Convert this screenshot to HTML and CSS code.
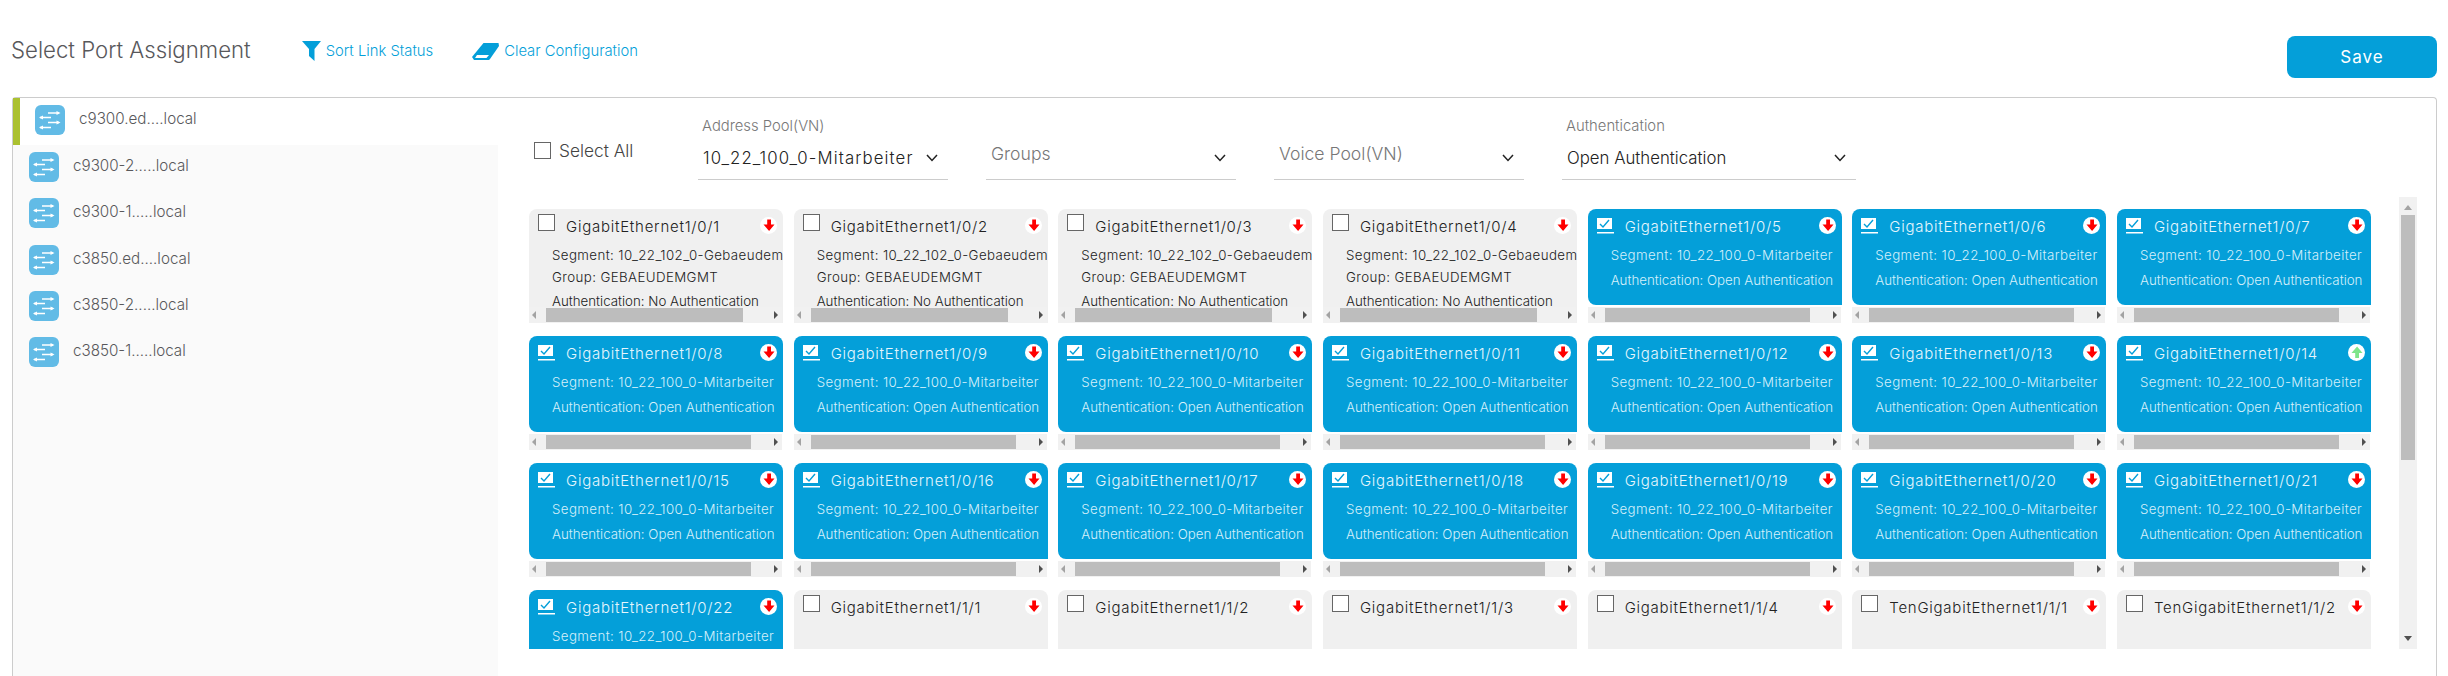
FILE: index.html
```html
<!DOCTYPE html>
<html lang="en">
<head>
  <meta charset="UTF-8" />
  <title>Select Port Assignment</title>
  <link rel="stylesheet" href="styles.css">
</head>
<body>

  <svg class="defs" width="0" height="0">
    <symbol id="switch" viewBox="0 0 30 30">
      <g fill="none" stroke="#fff" stroke-width="1.4">
        <path d="M13 8h11M5 12.5h11M13 17.5h11M5 22.500h11"/>
      </g>
      <g fill="#fff">
        <path d="M25.500 8l-4-2v4zM4 12.500l4-2v4zM25.500 17.500l-4-2v4zM4 22.500l4-2v4z"/>
      </g>
    </symbol>
    <symbol id="down" viewBox="0 0 17 17">
      <circle cx="8.500" cy="8.500" r="8.500" fill="#fff"/>
      <path d="M7.200 2.500h3.800v5h3.500l-5.400 6.500-5.600-6.500h3.700z" fill="#f00"/>
    </symbol>
    <symbol id="up" viewBox="0 0 17 17">
      <circle cx="8.500" cy="8.500" r="8.500" fill="#fff"/>
      <path d="M7.200 14h3.800v-5h3.500l-5.400-6.500-5.600 6.500h3.700z" fill="#7fe58a"/>
    </symbol>
    <symbol id="chev" viewBox="0 0 12 8">
      <path d="M1 1l5 5.500 5-5.500" fill="none" stroke="#222" stroke-width="1.500"/>
    </symbol>
    <symbol id="check" viewBox="0 0 17 16">
      <path d="M0 0h15v11H0z" fill="#fff"/>
      <path d="M3 6l3 3 6-7" fill="none" stroke="#049fd9" stroke-width="1.400"/>
      <path d="M0 14h17v1.500H0z" fill="#fff"/>
    </symbol>
  </svg>

  <!-- Title row -->
  <div class="top">
    <div class="title">Select Port Assignment</div>
    <a class="link link-sort">
      <svg width="19" height="20" viewBox="0 0 19 20"><path d="M0 0h19l-6.500 8v12L7 15V8z" fill="#049fd9"/></svg>
      Sort Link Status
    </a>
    <a class="link link-clear">
      <svg width="27" height="18" viewBox="0 0 27 18">
        <path d="M11.500 1h15l.5 3L18 17l-1 1H2l-2-3z" fill="#049fd9"/>
        <path d="M5 13h12l-2.500 3H3z" fill="#fff"/>
      </svg>
      Clear Configuration
    </a>
    <button class="save">Save</button>
  </div>

  <div class="panel">

    <!-- Devices -->
    <div class="sidebar">
      <div class="device selected"><svg class="device-icon"><use href="#switch"/></svg>c9300.ed....local</div>
      <div class="device"><svg class="device-icon"><use href="#switch"/></svg>c9300-2.....local</div>
      <div class="device"><svg class="device-icon"><use href="#switch"/></svg>c9300-1.....local</div>
      <div class="device"><svg class="device-icon"><use href="#switch"/></svg>c3850.ed....local</div>
      <div class="device"><svg class="device-icon"><use href="#switch"/></svg>c3850-2.....local</div>
      <div class="device"><svg class="device-icon"><use href="#switch"/></svg>c3850-1.....local</div>
    </div>

    <div class="main">

      <!-- Filters -->
      <div class="filters">
        <label class="select-all"><span class="box"></span>Select All</label>
        <div class="field">
          <div class="field-label">Address Pool(VN)</div>
          <div class="field-value pool">10_22_100_0-Mitarbeiter<svg class="chev"><use href="#chev"/></svg></div>
        </div>
        <div class="field">
          <div class="field-value empty">Groups<svg class="chev"><use href="#chev"/></svg></div>
        </div>
        <div class="field">
          <div class="field-value empty">Voice Pool(VN)<svg class="chev"><use href="#chev"/></svg></div>
        </div>
        <div class="field wide">
          <div class="field-label">Authentication</div>
          <div class="field-value">Open Authentication<svg class="chev"><use href="#chev"/></svg></div>
        </div>
      </div>

      <!-- Ports -->
      <div class="ports-wrap">
        <div class="ports">

          <div class="port off">
            <div class="port-body">
              <div class="port-head"><span class="box"></span><span class="port-name">GigabitEthernet1/0/1</span><svg class="status"><use href="#down"/></svg></div>
              <p class="seg">Segment: 10_22_102_0-Gebaeudem</p>
              <p class="grp">Group: GEBAEUDEMGMT</p>
              <p class="auth">Authentication: No Authentication</p>
            </div>
            <div class="hbar"><i class="arr-l"></i><b></b><i class="arr-r"></i></div>
          </div>
          <div class="port off">
            <div class="port-body">
              <div class="port-head"><span class="box"></span><span class="port-name">GigabitEthernet1/0/2</span><svg class="status"><use href="#down"/></svg></div>
              <p class="seg">Segment: 10_22_102_0-Gebaeudem</p>
              <p class="grp">Group: GEBAEUDEMGMT</p>
              <p class="auth">Authentication: No Authentication</p>
            </div>
            <div class="hbar"><i class="arr-l"></i><b></b><i class="arr-r"></i></div>
          </div>
          <div class="port off">
            <div class="port-body">
              <div class="port-head"><span class="box"></span><span class="port-name">GigabitEthernet1/0/3</span><svg class="status"><use href="#down"/></svg></div>
              <p class="seg">Segment: 10_22_102_0-Gebaeudem</p>
              <p class="grp">Group: GEBAEUDEMGMT</p>
              <p class="auth">Authentication: No Authentication</p>
            </div>
            <div class="hbar"><i class="arr-l"></i><b></b><i class="arr-r"></i></div>
          </div>
          <div class="port off">
            <div class="port-body">
              <div class="port-head"><span class="box"></span><span class="port-name">GigabitEthernet1/0/4</span><svg class="status"><use href="#down"/></svg></div>
              <p class="seg">Segment: 10_22_102_0-Gebaeudem</p>
              <p class="grp">Group: GEBAEUDEMGMT</p>
              <p class="auth">Authentication: No Authentication</p>
            </div>
            <div class="hbar"><i class="arr-l"></i><b></b><i class="arr-r"></i></div>
          </div>
          <div class="port on">
            <div class="port-body">
              <div class="port-head"><svg class="tick"><use href="#check"/></svg><span class="port-name">GigabitEthernet1/0/5</span><svg class="status"><use href="#down"/></svg></div>
              <p class="seg">Segment: 10_22_100_0-Mitarbeiter</p>
              <p class="auth">Authentication: Open Authentication</p>
            </div>
            <div class="hbar"><i class="arr-l"></i><b></b><i class="arr-r"></i></div>
          </div>
          <div class="port on">
            <div class="port-body">
              <div class="port-head"><svg class="tick"><use href="#check"/></svg><span class="port-name">GigabitEthernet1/0/6</span><svg class="status"><use href="#down"/></svg></div>
              <p class="seg">Segment: 10_22_100_0-Mitarbeiter</p>
              <p class="auth">Authentication: Open Authentication</p>
            </div>
            <div class="hbar"><i class="arr-l"></i><b></b><i class="arr-r"></i></div>
          </div>
          <div class="port on">
            <div class="port-body">
              <div class="port-head"><svg class="tick"><use href="#check"/></svg><span class="port-name">GigabitEthernet1/0/7</span><svg class="status"><use href="#down"/></svg></div>
              <p class="seg">Segment: 10_22_100_0-Mitarbeiter</p>
              <p class="auth">Authentication: Open Authentication</p>
            </div>
            <div class="hbar"><i class="arr-l"></i><b></b><i class="arr-r"></i></div>
          </div>

          <div class="port on">
            <div class="port-body">
              <div class="port-head"><svg class="tick"><use href="#check"/></svg><span class="port-name">GigabitEthernet1/0/8</span><svg class="status"><use href="#down"/></svg></div>
              <p class="seg">Segment: 10_22_100_0-Mitarbeiter</p>
              <p class="auth">Authentication: Open Authentication</p>
            </div>
            <div class="hbar"><i class="arr-l"></i><b></b><i class="arr-r"></i></div>
          </div>
          <div class="port on">
            <div class="port-body">
              <div class="port-head"><svg class="tick"><use href="#check"/></svg><span class="port-name">GigabitEthernet1/0/9</span><svg class="status"><use href="#down"/></svg></div>
              <p class="seg">Segment: 10_22_100_0-Mitarbeiter</p>
              <p class="auth">Authentication: Open Authentication</p>
            </div>
            <div class="hbar"><i class="arr-l"></i><b></b><i class="arr-r"></i></div>
          </div>
          <div class="port on">
            <div class="port-body">
              <div class="port-head"><svg class="tick"><use href="#check"/></svg><span class="port-name">GigabitEthernet1/0/10</span><svg class="status"><use href="#down"/></svg></div>
              <p class="seg">Segment: 10_22_100_0-Mitarbeiter</p>
              <p class="auth">Authentication: Open Authentication</p>
            </div>
            <div class="hbar"><i class="arr-l"></i><b></b><i class="arr-r"></i></div>
          </div>
          <div class="port on">
            <div class="port-body">
              <div class="port-head"><svg class="tick"><use href="#check"/></svg><span class="port-name">GigabitEthernet1/0/11</span><svg class="status"><use href="#down"/></svg></div>
              <p class="seg">Segment: 10_22_100_0-Mitarbeiter</p>
              <p class="auth">Authentication: Open Authentication</p>
            </div>
            <div class="hbar"><i class="arr-l"></i><b></b><i class="arr-r"></i></div>
          </div>
          <div class="port on">
            <div class="port-body">
              <div class="port-head"><svg class="tick"><use href="#check"/></svg><span class="port-name">GigabitEthernet1/0/12</span><svg class="status"><use href="#down"/></svg></div>
              <p class="seg">Segment: 10_22_100_0-Mitarbeiter</p>
              <p class="auth">Authentication: Open Authentication</p>
            </div>
            <div class="hbar"><i class="arr-l"></i><b></b><i class="arr-r"></i></div>
          </div>
          <div class="port on">
            <div class="port-body">
              <div class="port-head"><svg class="tick"><use href="#check"/></svg><span class="port-name">GigabitEthernet1/0/13</span><svg class="status"><use href="#down"/></svg></div>
              <p class="seg">Segment: 10_22_100_0-Mitarbeiter</p>
              <p class="auth">Authentication: Open Authentication</p>
            </div>
            <div class="hbar"><i class="arr-l"></i><b></b><i class="arr-r"></i></div>
          </div>
          <div class="port on">
            <div class="port-body">
              <div class="port-head"><svg class="tick"><use href="#check"/></svg><span class="port-name">GigabitEthernet1/0/14</span><svg class="status"><use href="#up"/></svg></div>
              <p class="seg">Segment: 10_22_100_0-Mitarbeiter</p>
              <p class="auth">Authentication: Open Authentication</p>
            </div>
            <div class="hbar"><i class="arr-l"></i><b></b><i class="arr-r"></i></div>
          </div>

          <div class="port on">
            <div class="port-body">
              <div class="port-head"><svg class="tick"><use href="#check"/></svg><span class="port-name">GigabitEthernet1/0/15</span><svg class="status"><use href="#down"/></svg></div>
              <p class="seg">Segment: 10_22_100_0-Mitarbeiter</p>
              <p class="auth">Authentication: Open Authentication</p>
            </div>
            <div class="hbar"><i class="arr-l"></i><b></b><i class="arr-r"></i></div>
          </div>
          <div class="port on">
            <div class="port-body">
              <div class="port-head"><svg class="tick"><use href="#check"/></svg><span class="port-name">GigabitEthernet1/0/16</span><svg class="status"><use href="#down"/></svg></div>
              <p class="seg">Segment: 10_22_100_0-Mitarbeiter</p>
              <p class="auth">Authentication: Open Authentication</p>
            </div>
            <div class="hbar"><i class="arr-l"></i><b></b><i class="arr-r"></i></div>
          </div>
          <div class="port on">
            <div class="port-body">
              <div class="port-head"><svg class="tick"><use href="#check"/></svg><span class="port-name">GigabitEthernet1/0/17</span><svg class="status"><use href="#down"/></svg></div>
              <p class="seg">Segment: 10_22_100_0-Mitarbeiter</p>
              <p class="auth">Authentication: Open Authentication</p>
            </div>
            <div class="hbar"><i class="arr-l"></i><b></b><i class="arr-r"></i></div>
          </div>
          <div class="port on">
            <div class="port-body">
              <div class="port-head"><svg class="tick"><use href="#check"/></svg><span class="port-name">GigabitEthernet1/0/18</span><svg class="status"><use href="#down"/></svg></div>
              <p class="seg">Segment: 10_22_100_0-Mitarbeiter</p>
              <p class="auth">Authentication: Open Authentication</p>
            </div>
            <div class="hbar"><i class="arr-l"></i><b></b><i class="arr-r"></i></div>
          </div>
          <div class="port on">
            <div class="port-body">
              <div class="port-head"><svg class="tick"><use href="#check"/></svg><span class="port-name">GigabitEthernet1/0/19</span><svg class="status"><use href="#down"/></svg></div>
              <p class="seg">Segment: 10_22_100_0-Mitarbeiter</p>
              <p class="auth">Authentication: Open Authentication</p>
            </div>
            <div class="hbar"><i class="arr-l"></i><b></b><i class="arr-r"></i></div>
          </div>
          <div class="port on">
            <div class="port-body">
              <div class="port-head"><svg class="tick"><use href="#check"/></svg><span class="port-name">GigabitEthernet1/0/20</span><svg class="status"><use href="#down"/></svg></div>
              <p class="seg">Segment: 10_22_100_0-Mitarbeiter</p>
              <p class="auth">Authentication: Open Authentication</p>
            </div>
            <div class="hbar"><i class="arr-l"></i><b></b><i class="arr-r"></i></div>
          </div>
          <div class="port on">
            <div class="port-body">
              <div class="port-head"><svg class="tick"><use href="#check"/></svg><span class="port-name">GigabitEthernet1/0/21</span><svg class="status"><use href="#down"/></svg></div>
              <p class="seg">Segment: 10_22_100_0-Mitarbeiter</p>
              <p class="auth">Authentication: Open Authentication</p>
            </div>
            <div class="hbar"><i class="arr-l"></i><b></b><i class="arr-r"></i></div>
          </div>

          <div class="port on">
            <div class="port-body">
              <div class="port-head"><svg class="tick"><use href="#check"/></svg><span class="port-name">GigabitEthernet1/0/22</span><svg class="status"><use href="#down"/></svg></div>
              <p class="seg">Segment: 10_22_100_0-Mitarbeiter</p>
            </div>
          </div>
          <div class="port off">
            <div class="port-body">
              <div class="port-head"><span class="box"></span><span class="port-name">GigabitEthernet1/1/1</span><svg class="status"><use href="#down"/></svg></div>
            </div>
          </div>
          <div class="port off">
            <div class="port-body">
              <div class="port-head"><span class="box"></span><span class="port-name">GigabitEthernet1/1/2</span><svg class="status"><use href="#down"/></svg></div>
            </div>
          </div>
          <div class="port off">
            <div class="port-body">
              <div class="port-head"><span class="box"></span><span class="port-name">GigabitEthernet1/1/3</span><svg class="status"><use href="#down"/></svg></div>
            </div>
          </div>
          <div class="port off">
            <div class="port-body">
              <div class="port-head"><span class="box"></span><span class="port-name">GigabitEthernet1/1/4</span><svg class="status"><use href="#down"/></svg></div>
            </div>
          </div>
          <div class="port off">
            <div class="port-body">
              <div class="port-head"><span class="box"></span><span class="port-name">TenGigabitEthernet1/1/1</span><svg class="status"><use href="#down"/></svg></div>
            </div>
          </div>
          <div class="port off">
            <div class="port-body">
              <div class="port-head"><span class="box"></span><span class="port-name">TenGigabitEthernet1/1/2</span><svg class="status"><use href="#down"/></svg></div>
            </div>
          </div>

        </div>

        <div class="vbar"><i class="arr-u"></i><b></b><i class="arr-d"></i></div>
      </div>
    </div>
  </div>

</body>
</html>
```

FILE: styles.css
```css
html, body {
  margin: 0; padding: 0; height: 100%;
  overflow: hidden;
  background: #fff;
  font-family: Inter, "Noto Sans", sans-serif;
  font-weight: 300;
  color: #444;
}
.defs {
  position: absolute;
}

/* title row */
.top {
  display: flex;
  height: 61px;
  padding: 36px 11px 0 11px;
}
.title {
  font-size: 22.200px;
  line-height: 28px;
  color: #58585b;
}
.link {
  display: flex;
  align-items: center;
  gap: 5px;
  height: 30px;
  font-size: 14.800px;
  color: #049fd9;
}
.link-sort {
  margin-left: 51px;
}
.link-clear {
  margin-left: 39px;
}
.save {
  margin-left: auto;
  width: 150px;
  height: 42px;
  border: 0;
  border-radius: 8px;
  background: #049fd9;
  color: #fff;
  font-family: inherit;
  font-size: 17px;
  font-weight: 400;
  letter-spacing: 1px;
}

/* panel */
.panel {
  display: flex;
  height: 578px;
  margin: 0 11px 0 12px;
  border: 1px solid #ccc;
  border-bottom: 0;
  border-radius: 4px 4px 0 0;
}
.sidebar {
  width: 485px;
  flex: none;
  background: #fafafa;
}
.device {
  display: flex;
  align-items: flex-start;
  gap: 14px;
  box-sizing: border-box;
  height: 46.250px;
  padding: 7px 0 0 16px;
  font-size: 15.200px;
  line-height: 28px;
  color: #58585b;
}
.device.selected {
  height: 47px;
  padding-left: 15px;
  background: #fff;
  border-left: 7px solid #abc130;
}
.device-icon {
  width: 30px;
  height: 30px;
  flex: none;
  border-radius: 6px;
  background: #62bbe6;
}

.main {
  flex: 1;
  min-width: 0;
}

/* filters */
.filters {
  display: flex;
  align-items: flex-start;
  gap: 38px;
  box-sizing: border-box;
  height: 99px;
  padding: 18px 0 0 36px;
}
.select-all {
  display: flex;
  align-items: center;
  gap: 8px;
  width: 126px;
  margin-top: 24px;
  font-size: 17.300px;
  color: #444;
}
.box {
  width: 17px;
  height: 17px;
  box-sizing: border-box;
  flex: none;
  border: 1.500px solid #666;
  background: #fff;
}
.field {
  display: flex;
  flex-direction: column;
  justify-content: flex-end;
  box-sizing: border-box;
  width: 250px;
  height: 64px;
  border-bottom: 1px solid #ccc;
}
.field.wide {
  width: 294px;
}
.field-label {
  height: 20px;
  margin-bottom: 10px;
  padding-left: 4px;
  font-size: 14.800px;
  line-height: 20px;
  color: #777;
}
.field-value {
  display: flex;
  justify-content: space-between;
  height: 24px;
  padding: 0 10px 9px 5px;
  font-size: 16.800px;
  line-height: 24px;
  color: #222;
}
.field-value.pool {
  letter-spacing: 1.100px;
}
.field-value.empty {
  padding-bottom: 13px;
  font-size: 17.600px;
  color: #777;
}
.field-value.empty .chev {
  margin-top: 12px;
}
.chev {
  width: 12px;
  height: 8px;
  margin-top: 8px;
}

/* ports */
.ports-wrap {
  display: flex;
  height: 452px;
  overflow: hidden;
  padding-left: 31px;
}
.ports {
  display: grid;
  grid-template-columns: repeat(7, 254px);
  grid-auto-rows: 114px;
  column-gap: 10.670px;
  row-gap: 13px;
  padding-top: 12px;
  width: 1842px;
  flex: none;
}
.port {
  display: flex;
  flex-direction: column;
  font-size: 13.300px;
}
.port-body {
  height: 96px;
  flex: none;
  overflow: hidden;
  border-radius: 8px 8px 0 8px;
  white-space: nowrap;
}
.port.on .port-body {
  background: #049fd9;
  color: #d5f0fb;
}
.port.off {
  border-radius: 8px 8px 0 0;
  background: #f0f0f0;
  color: #222;
}
.port.off .port-body {
  height: 98px;
}
.port-head {
  display: flex;
  align-items: flex-start;
  box-sizing: border-box;
  height: 34px;
  padding: 5px 6px 0 9px;
}
.port.on .port-head {
  padding-top: 9px;
}
.tick {
  width: 17px;
  height: 16px;
  flex: none;
}
.port-name {
  flex: 1;
  margin-left: 11px;
  font-size: 15px;
  line-height: 26px;
  letter-spacing: 0.750px;
  color: #222;
}
.port.on .port-name {
  margin-top: -4px;
  color: #e6f6fd;
}
.status {
  width: 17px;
  height: 17px;
  flex: none;
  margin-top: 3px;
}
.port.on .status {
  margin-top: -1px;
}
.port-body p {
  margin: 0 0 0 23px;
  line-height: 20px;
}
.port-body .seg {
  margin-top: 2px;
  letter-spacing: 0.400px;
}
.port-body .grp {
  margin-top: 2px;
  letter-spacing: 0.400px;
}
.port-body .auth {
  margin-top: 4px;
}
.port.on .auth {
  margin-top: 5px;
}

/* drawn scrollbars */
.hbar {
  display: flex;
  align-items: center;
  height: 16px;
  margin: 2px 1px 0 0;
  padding: 0 4px 0 3px;
  background: #f1f1f1;
}
.port.off .hbar {
  margin-top: 0;
}
.hbar b {
  width: 205px;
  height: 14px;
  margin-left: 10px;
  background: #bdbdbd;
}
.port.off .hbar b {
  width: 197px;
}
.hbar i {
  width: 0;
  height: 0;
  border-top: 4px solid transparent;
  border-bottom: 4px solid transparent;
}
.arr-l {
  border-right: 4px solid #a3a3a3;
}
.arr-r {
  margin-left: auto;
  border-left: 4px solid #505050;
}
.vbar {
  display: flex;
  flex-direction: column;
  align-items: center;
  width: 18px;
  height: 452px;
  flex: none;
  margin-left: 28px;
  background: #f1f1f1;
}
.vbar b {
  width: 14px;
  height: 245px;
  margin-top: 5px;
  background: #bdbdbd;
}
.vbar i {
  width: 0;
  height: 0;
  border-left: 4px solid transparent;
  border-right: 4px solid transparent;
}
.arr-u {
  margin-top: 8px;
  border-bottom: 5px solid #a3a3a3;
}
.arr-d {
  margin-top: auto;
  margin-bottom: 8px;
  border-top: 5px solid #505050;
}
```
